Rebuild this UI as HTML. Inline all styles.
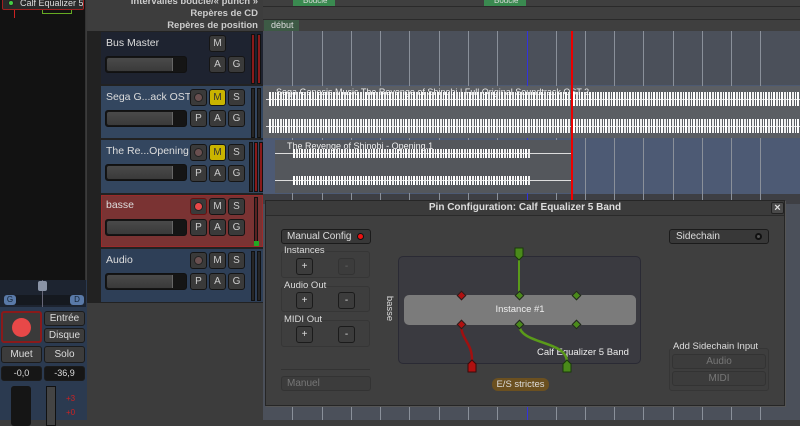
<!DOCTYPE html>
<html><head><meta charset="utf-8"><style>
*{box-sizing:border-box;margin:0;padding:0}
body{width:800px;height:420px;overflow:hidden;background:#3c3c3c;font-family:"Liberation Sans","DejaVu Sans",sans-serif;position:relative;color:#ddd}
.a{position:absolute}
.btn{position:absolute;width:17px;height:17px;background:#3a3a3a;border:1px solid #151515;border-radius:3px;color:#ccc;font-size:10px;text-align:center;line-height:15px}
.y{background:#c9b400;color:#333}
.rec{position:absolute;width:17px;height:17px;background:#3a3a3a;border:1px solid #151515;border-radius:3px}
.rec i{position:absolute;left:3px;top:3px;width:9px;height:9px;border-radius:50%;background:#6a5050;border:1px solid #222}
.fader{position:absolute;left:105px;width:82px;height:17px;background:#151515;border:1px solid #111;border-radius:3px}
.fader i{position:absolute;left:1px;top:1px;width:66px;height:13px;background:linear-gradient(#4a4a4a,#3a3a3a);border-right:1px solid #666;border-radius:2px 0 0 2px}
.name{position:absolute;left:106px;font-size:10.5px;color:#ddd;white-space:nowrap}
.mt{position:absolute;width:4px;background:#262626;border:1px solid #111}
.grid{position:absolute;top:0;bottom:0;width:1px;background:#8a909a}
.wave{position:absolute;height:14px;background:repeating-linear-gradient(90deg,#fff 0 2px,transparent 2px 3px,#eee 3px 5px,transparent 5px 6px,#fff 6px 7px,transparent 7px 8px)}
.db{position:absolute;background:#3c3c3c;border:1px solid #1b1b1b;border-radius:3px;color:#ddd;font-size:10px;text-align:center}
.grp{position:absolute;border:1px solid #363636;border-radius:3px;background:#3e3e3e}
.lbl{position:absolute;font-size:9.5px;color:#ddd}
.dia{position:absolute;width:7px;height:7px;transform:rotate(45deg);border:1px solid #222}
</style></head><body>
<div class="a" style="left:0;top:0;width:86px;height:280px;background:#121212;border-right:1px solid #333"></div>
<div class="a" style="left:2px;top:-3px;width:82px;height:13px;border:1px solid #a02020;border-radius:2px;background:#2a2a2a;font-size:9px;color:#ddd;padding-left:17px;line-height:10px;white-space:nowrap;overflow:hidden">Calf Equalizer 5</div>
<div class="a" style="left:8px;top:0px;width:6px;height:6px;border-radius:50%;background:#4c4;border:1px solid #222"></div>
<div class="a" style="left:14px;top:10px;width:1px;height:8px;background:#c22"></div>
<div class="a" style="left:42px;top:10px;width:30px;height:4px;border:1px solid #6a2;border-top:none"></div>
<div class="a" style="left:0;top:280px;width:87px;height:140px;background:#2b3a50"></div>
<div class="a" style="left:0;top:280px;width:86px;height:27px;background:#1d2430"></div>
<div class="a" style="left:4px;top:295px;width:80px;height:10px;background:#15191f;border-radius:3px"></div>
<div class="a" style="left:4px;top:295px;width:12px;height:10px;background:#5a7aa8;border-radius:3px;font-size:8px;color:#123;text-align:center;line-height:10px">G</div>
<div class="a" style="left:70px;top:295px;width:14px;height:10px;background:#5a7aa8;border-radius:3px;font-size:8px;color:#123;text-align:center;line-height:10px">D</div>
<div class="a" style="left:42px;top:280px;width:1px;height:27px;background:#667"></div>
<div class="a" style="left:38px;top:281px;width:9px;height:10px;background:#8a94a6;border-radius:2px"></div>
<div class="a" style="left:1px;top:311px;width:41px;height:32px;background:#3a3a3a;border:2px solid #8a1a1a;border-radius:3px"></div>
<div class="a" style="left:12px;top:318px;width:19px;height:19px;border-radius:50%;background:#e84848"></div>
<div class="db" style="left:44px;top:311px;width:41px;height:15px;line-height:13px">Entrée</div>
<div class="db" style="left:44px;top:328px;width:41px;height:15px;line-height:13px">Disque</div>
<div class="db" style="left:1px;top:346px;width:41px;height:17px;line-height:15px">Muet</div>
<div class="db" style="left:44px;top:346px;width:41px;height:17px;line-height:15px">Solo</div>
<div class="db" style="left:1px;top:366px;width:41px;height:15px;line-height:13px;background:#161616;font-size:9px">-0,0</div>
<div class="db" style="left:44px;top:366px;width:41px;height:15px;line-height:13px;background:#161616;font-size:9px">-36,9</div>
<div class="a" style="left:11px;top:386px;width:20px;height:40px;background:#151515;border-radius:3px"></div>
<div class="a" style="left:46px;top:386px;width:10px;height:40px;background:#444;border:1px solid #111"></div>
<div class="a" style="left:66px;top:394px;font-size:8px;color:#c22">+3</div>
<div class="a" style="left:66px;top:408px;font-size:8px;color:#c22">+0</div>
<div class="a" style="left:87px;top:31px;width:14px;height:272px;background:#222"></div>
<div class="a" style="left:88px;top:0;width:175px;height:31px;background:#3d3d3d"></div>
<div class="a" style="left:88px;top:-4px;width:170px;text-align:right;font-size:9.5px;font-weight:bold;color:#ccc;white-space:nowrap">Intervalles boucle/« punch »</div>
<div class="a" style="left:88px;top:8px;width:170px;text-align:right;font-size:9.5px;font-weight:bold;color:#ccc">Repères de CD</div>
<div class="a" style="left:88px;top:20px;width:170px;text-align:right;font-size:9.5px;font-weight:bold;color:#ccc">Repères de position</div>
<div class="a" style="left:263px;top:0;width:537px;height:31px;background:#3f3f3f"></div>
<div class="a" style="left:263px;top:6px;width:537px;height:1px;background:#2a2a2a"></div>
<div class="a" style="left:263px;top:19px;width:537px;height:1px;background:#2a2a2a"></div>
<div class="a" style="left:293px;top:-2px;width:42px;height:8px;background:#3a8a50;font-size:8px;color:#ddd;padding-left:10px;line-height:6px">Boucle</div>
<div class="a" style="left:484px;top:-2px;width:42px;height:8px;background:#3a8a50;font-size:8px;color:#ddd;padding-left:10px;line-height:6px">Boucle</div>
<div class="a" style="left:264px;top:20px;width:35px;height:11px;background:#3d5a45;font-size:9px;color:#ddd;padding-left:7px;line-height:11px">début</div>
<div class="a" style="left:263px;top:31px;width:537px;height:389px;background:#4b505a;overflow:hidden">
 <div class="a" style="left:0;top:54px;width:537px;height:54px;background:#4d5a72"></div>
 <div class="a" style="left:0;top:108px;width:537px;height:55px;background:#4d5a74"></div>
 <div class="a" style="left:0;top:163px;width:537px;height:10px;background:#3e3f44"></div>
 <div class="a" style="left:0;top:173px;width:537px;height:216px;background:#4b505a"></div>
 <div class="grid" style="left:29px"></div><div class="grid" style="left:59px"></div><div class="grid" style="left:88px"></div><div class="grid" style="left:117px"></div><div class="grid" style="left:146px"></div><div class="grid" style="left:176px"></div><div class="grid" style="left:205px"></div><div class="grid" style="left:234px"></div><div class="grid" style="left:264px;background:#33d"></div><div class="grid" style="left:293px"></div><div class="grid" style="left:322px"></div><div class="grid" style="left:351px"></div><div class="grid" style="left:380px"></div><div class="grid" style="left:410px"></div><div class="grid" style="left:439px"></div><div class="grid" style="left:468px"></div><div class="grid" style="left:497px"></div>
 <div class="a" style="left:0;top:55px;width:537px;height:52px;background:#5b5e63"></div>
 <div class="a" style="left:13px;top:56px;font-size:9px;color:#eee;white-space:nowrap">Sega Genesis Music The Revenge of Shinobi | Full Original Soundtrack OST 2</div>
 <div class="a" style="left:3px;top:68px;width:534px;height:1px;background:#ddd"></div>
 <div class="wave" style="left:6px;top:61px;width:531px"></div>
 <div class="a" style="left:3px;top:95px;width:534px;height:1px;background:#ddd"></div>
 <div class="wave" style="left:6px;top:88px;width:531px"></div>
 <div class="a" style="left:12px;top:109px;width:297px;height:53px;background:#54575c"></div>
 <div class="a" style="left:24px;top:110px;font-size:9px;color:#eee;white-space:nowrap">The Revenge of Shinobi - Opening.1</div>
 <div class="a" style="left:12px;top:122px;width:297px;height:1px;background:#ddd"></div>
 <div class="wave" style="left:30px;top:118px;width:238px;height:9px"></div>
 <div class="a" style="left:12px;top:149px;width:297px;height:1px;background:#ddd"></div>
 <div class="wave" style="left:30px;top:145px;width:238px;height:9px"></div>
 <div class="a" style="left:308px;top:0;width:2px;height:175px;background:#e00"></div>
</div>
<div class="a" style="left:101px;top:31px;width:162px;height:272px;background:#222"></div>
<div class="a" style="left:101px;top:32px;width:162px;height:52px;background:#1e2330"></div>
<div class="a" style="left:101px;top:86px;width:162px;height:52px;background:#33465f"></div>
<div class="a" style="left:101px;top:140px;width:162px;height:53px;background:#33465f"></div>
<div class="a" style="left:101px;top:195px;width:162px;height:52px;background:#7a3333;border:1px solid #9a2a2a"></div>
<div class="a" style="left:101px;top:249px;width:162px;height:53px;background:#2e3f57"></div>
<div class="name" style="top:37px">Bus Master</div>
<div class="name" style="top:91px">Sega G...ack OST</div>
<div class="name" style="top:145px">The Re...Opening</div>
<div class="name" style="top:199px">basse</div>
<div class="name" style="top:254px">Audio</div>
<div class="fader" style="top:56px"><i></i></div>
<div class="fader" style="top:110px"><i></i></div>
<div class="fader" style="top:164px"><i></i></div>
<div class="fader" style="top:219px"><i></i></div>
<div class="fader" style="top:273px"><i></i></div>
<div class="btn" style="left:209px;top:35px">M</div>
<div class="btn" style="left:209px;top:56px">A</div><div class="btn" style="left:228px;top:56px">G</div>
<div class="rec" style="left:190px;top:89px"><i></i></div><div class="btn y" style="left:209px;top:89px">M</div><div class="btn" style="left:228px;top:89px">S</div>
<div class="btn" style="left:190px;top:110px">P</div><div class="btn" style="left:209px;top:110px">A</div><div class="btn" style="left:228px;top:110px">G</div>
<div class="rec" style="left:190px;top:144px"><i></i></div><div class="btn y" style="left:209px;top:144px">M</div><div class="btn" style="left:228px;top:144px">S</div>
<div class="btn" style="left:190px;top:165px">P</div><div class="btn" style="left:209px;top:165px">A</div><div class="btn" style="left:228px;top:165px">G</div>
<div class="rec" style="left:190px;top:198px;border-color:#6a1010"><i style="background:#e84848"></i></div><div class="btn" style="left:209px;top:198px">M</div><div class="btn" style="left:228px;top:198px">S</div>
<div class="btn" style="left:190px;top:219px">P</div><div class="btn" style="left:209px;top:219px">A</div><div class="btn" style="left:228px;top:219px">G</div>
<div class="rec" style="left:190px;top:252px"><i></i></div><div class="btn" style="left:209px;top:252px">M</div><div class="btn" style="left:228px;top:252px">S</div>
<div class="btn" style="left:190px;top:273px">P</div><div class="btn" style="left:209px;top:273px">A</div><div class="btn" style="left:228px;top:273px">G</div>
<div class="mt" style="left:251px;top:34px;height:50px;background:#8a1a1a"></div><div class="mt" style="left:257px;top:34px;height:50px;background:#8a1a1a"></div>
<div class="mt" style="left:251px;top:88px;height:50px"></div><div class="mt" style="left:257px;top:88px;height:50px"></div>
<div class="mt" style="left:249px;top:142px;height:50px"></div><div class="mt" style="left:254px;top:142px;height:50px;background:#8a1a1a"></div><div class="mt" style="left:259px;top:142px;height:50px;background:#8a1a1a"></div>
<div class="mt" style="left:254px;top:197px;height:49px;background:#5a2222"></div>
<div class="a" style="left:254px;top:241px;width:5px;height:5px;background:#2a2"></div>
<div class="mt" style="left:251px;top:251px;height:50px"></div><div class="mt" style="left:257px;top:251px;height:50px"></div>
<div class="a" style="left:265px;top:200px;width:520px;height:206px;background:#3f3f3f;border:1px solid #262626;box-shadow:1px 1px 0 #555"></div>
<div class="a" style="left:266px;top:201px;width:518px;height:15px;background:#3b3b3b;border-bottom:1px solid #2a2a2a;font-size:10px;font-weight:bold;color:#ddd;text-align:center;line-height:14px">Pin Configuration: Calf Equalizer 5 Band</div>
<div class="a" style="left:771px;top:202px;width:13px;height:12px;border:1px solid #222;border-radius:2px;background:#4a4a4a;color:#ddd;font-size:11px;line-height:10px;text-align:center;font-weight:bold">×</div>
<div class="db" style="left:281px;top:229px;width:90px;height:15px;line-height:13px;text-align:left;padding-left:5px;background:#383838">Manual Config</div>
<div class="a" style="left:357px;top:233px;width:7px;height:7px;border-radius:50%;background:#e11;border:1px solid #111"></div>
<div class="grp" style="left:281px;top:251px;width:89px;height:27px"></div>
<div class="lbl" style="left:284px;top:245px">Instances</div>
<div class="db" style="left:296px;top:258px;width:17px;height:17px;line-height:15px">+</div>
<div class="db" style="left:338px;top:258px;width:17px;height:17px;line-height:15px;color:#666;border-color:#333">-</div>
<div class="grp" style="left:281px;top:286px;width:89px;height:26px"></div>
<div class="lbl" style="left:284px;top:280px">Audio Out</div>
<div class="db" style="left:296px;top:292px;width:17px;height:17px;line-height:15px">+</div>
<div class="db" style="left:338px;top:292px;width:17px;height:17px;line-height:15px">-</div>
<div class="grp" style="left:281px;top:320px;width:89px;height:27px"></div>
<div class="lbl" style="left:284px;top:314px">MIDI Out</div>
<div class="db" style="left:296px;top:326px;width:17px;height:17px;line-height:15px">+</div>
<div class="db" style="left:338px;top:326px;width:17px;height:17px;line-height:15px">-</div>
<div class="a" style="left:281px;top:369px;width:89px;height:1px;background:#333"></div>
<div class="db" style="left:281px;top:376px;width:90px;height:15px;line-height:13px;text-align:left;padding-left:5px;color:#777;border-color:#333">Manuel</div>
<div class="a" style="left:377px;top:303px;font-size:9.5px;transform:rotate(90deg);color:#ddd">basse</div>
<div class="a" style="left:398px;top:256px;width:243px;height:108px;background:#3a3a40;border:1px solid #2a2a34;border-radius:5px"></div>
<div class="a" style="left:404px;top:295px;width:232px;height:30px;background:#7b7b7b;border-radius:5px;font-size:9.5px;color:#eee;text-align:center;line-height:30px">Instance #1</div>
<div class="a" style="left:537px;top:347px;font-size:9.5px;color:#eee">Calf Equalizer 5 Band</div>
<svg class="a" style="left:0;top:0" width="800" height="420">
<path d="M519 260 L519 295" stroke="#5a9a1a" stroke-width="2" fill="none"/>
<path d="M461 324 C461 340 472 342 472 360" stroke="#a01010" stroke-width="2.5" fill="none"/>
<path d="M519 324 C519 345 567 340 567 362" stroke="#5a9a1a" stroke-width="2.5" fill="none"/>
<path d="M515 248 L523 248 L523 256 L519 260 L515 256Z" fill="#4a8a1a" stroke="#1a3a0a"/>
<path d="M468 372 L476 372 L476 364 L472 360 L468 364Z" fill="#b01010" stroke="#3a0a0a"/>
<path d="M563 372 L571 372 L571 364 L567 360 L563 364Z" fill="#4a8a1a" stroke="#1a3a0a"/>
</svg>
<div class="dia" style="left:458px;top:292px;background:#b01010"></div>
<div class="dia" style="left:516px;top:292px;background:#4a8a1a"></div>
<div class="dia" style="left:573px;top:292px;background:#4a8a1a"></div>
<div class="dia" style="left:458px;top:321px;background:#b01010"></div>
<div class="dia" style="left:516px;top:321px;background:#4a8a1a"></div>
<div class="dia" style="left:573px;top:321px;background:#4a8a1a"></div>
<div class="a" style="left:492px;top:378px;width:57px;height:13px;background:#6b5020;border-radius:6px;font-size:9.5px;color:#ddd;text-align:center;line-height:13px">E/S strictes</div>
<div class="db" style="left:669px;top:229px;width:100px;height:15px;line-height:13px;text-align:left;padding-left:6px;background:#383838">Sidechain</div>
<div class="a" style="left:755px;top:233px;width:7px;height:7px;border-radius:50%;border:2px solid #111;background:#555"></div>
<div class="grp" style="left:669px;top:348px;width:100px;height:43px"></div>
<div class="lbl" style="left:673px;top:341px">Add Sidechain Input</div>
<div class="db" style="left:672px;top:354px;width:94px;height:15px;line-height:13px;color:#777;border-color:#333">Audio</div>
<div class="db" style="left:672px;top:371px;width:94px;height:15px;line-height:13px;color:#777;border-color:#333">MIDI</div>
</body></html>
